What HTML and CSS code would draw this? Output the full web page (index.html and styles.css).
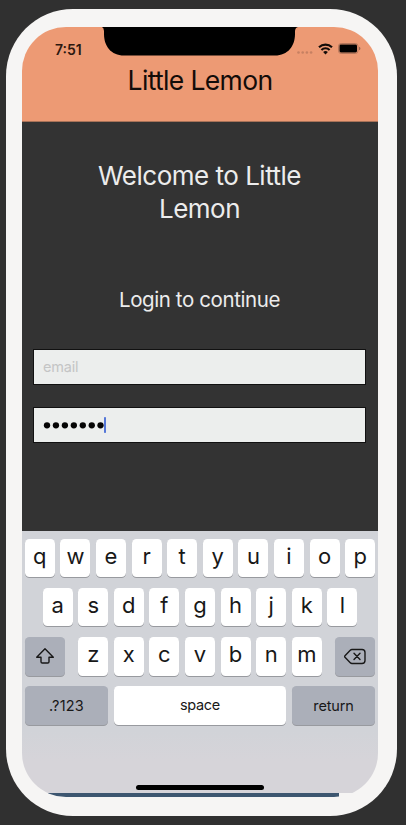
FILE: index.html
```html
<!DOCTYPE html>
<html lang="en">
<head>
<meta charset="utf-8">
<title>Little Lemon</title>
<link rel="stylesheet" href="styles.css">
</head>
<body>
<div class="phone">
  <div class="screen">
    <header class="header">
      <div class="notch"><svg width="196" height="29" viewBox="0 0 196 29"><path d="M0 0H196Q193.300 0.500 193 4V7C193 19 186 28.500 173 28.500H22C9 28.500 2 19 2 7V4Q1.700 .5 0 0Z"/></svg></div>
      <div class="status">
        <span class="time">7:51</span>
        <span class="icons">
          <svg class="dots" width="16" height="3" viewBox="0 0 16 3"><circle cx="1.500" cy="1.500" r="1.300"/><circle cx="5.700" cy="1.500" r="1.300"/><circle cx="9.900" cy="1.500" r="1.300"/><circle cx="14.100" cy="1.500" r="1.300"/></svg>
          <svg class="wifi" width="15" height="12" viewBox="0 0 15 12"><g fill="none" stroke="#120b08" stroke-width="2.200"><path d="M1 4.300C4.700.8 10.300.8 14 4.300"/><path d="M3.400 7C5.800 4.900 9.200 4.900 11.600 7"/></g><path d="M5.100 8.900Q7.500 7.100 9.900 8.900L7.500 11.400Z" fill="#120b08"/></svg>
          <svg class="battery" width="23" height="11" viewBox="0 0 23 11"><rect x=".5" y=".5" width="19.500" height="10" rx="2.700" fill="none" stroke="#b5775c"/><rect x="1.500" y="1.600" width="17.500" height="7.800" rx="1.400"/><path d="M21 3.700Q22.400 4 22.400 5.500T21 7.300Z" fill="#9a6650"/></svg>
        </span>
      </div>
      <h1 class="title">Little Lemon</h1>
    </header>
    <main class="login">
      <h2 class="welcome">Welcome to Little<br>Lemon</h2>
      <p class="prompt">Login to continue</p>
      <div class="field"><span class="placeholder">email</span></div>
      <div class="field"><svg class="password" width="64" height="17" viewBox="0 0 64 17"><g fill="#050505"><circle cx="4" cy="9.300" r="3.150"/><circle cx="12.950" cy="9.300" r="3.150"/><circle cx="21.900" cy="9.300" r="3.150"/><circle cx="30.850" cy="9.300" r="3.150"/><circle cx="39.800" cy="9.300" r="3.150"/><circle cx="48.750" cy="9.300" r="3.150"/><circle cx="57.500" cy="9.300" r="3.150"/></g><rect x="61" y="1" width="2" height="16" rx=".8" fill="#5577d8"/></svg></div>
    </main>
    <section class="keyboard">
      <div class="row"><b class="key">q</b><b class="key">w</b><b class="key">e</b><b class="key">r</b><b class="key">t</b><b class="key">y</b><b class="key">u</b><b class="key">i</b><b class="key">o</b><b class="key">p</b></div>
      <div class="row"><b class="key">a</b><b class="key">s</b><b class="key">d</b><b class="key">f</b><b class="key">g</b><b class="key">h</b><b class="key">j</b><b class="key">k</b><b class="key">l</b></div>
      <div class="row">
        <b class="key special shift"><svg width="20" height="18" viewBox="0 0 20 18"><path d="M10 1.800L18.300 10.200H14V14.700Q14 16 12.700 16H7.300Q6 16 6 14.700V10.200H1.700Z"/></svg></b>
        <b class="key">z</b><b class="key">x</b><b class="key">c</b><b class="key">v</b><b class="key">b</b><b class="key">n</b><b class="key">m</b>
        <b class="key special delete"><svg width="22" height="17" viewBox="0 0 22 17"><path d="M8 1.500H18Q21 1.500 21 4.500V12.500Q21 15.500 18 15.500H8Q7 15.500 6 14.500L1 9.300Q.3 8.500 1 7.700L6 2.500Q7 1.500 8 1.500Z"/><path d="M10 5.300L16 11.500M16 5.300L10 11.500"/></svg></b>
      </div>
      <div class="row"><b class="key special wide numbers">.?123</b><b class="key space">space</b><b class="key special wide">return</b></div>
      <div class="home"></div>
    </section>
    <div class="strip"></div>
  </div>
</div>
</body>
</html>
```
FILE: styles.css
```css
* { box-sizing: border-box; }
body {
  margin: 0;
  height: 825px;
  padding: 9px 9px 9.3px 5.5px;
  background: #303030;
  font-family: Inter, sans-serif;
  overflow: hidden;
}
svg { display: block; }
.phone {
  height: 806.7px;
  padding: 18px 19px 18.7px 16.5px;
  background: #f6f5f4;
  border-radius: 67px;
}
.screen {
  height: 770px;
  overflow: hidden;
  border-radius: 44px;
  background: #f6f5f4;
}
.header {
  position: relative;
  height: 95px;
  background: #ed9a74;
  border-bottom: 1px solid #a87258;
}
.notch { position: absolute; left: 80px; top: 0; }
.status {
  display: flex;
  justify-content: space-between;
  padding: 14px 17px 0 33px;
  height: 37px;
}
.time { font-size: 14px; line-height: 17px; font-weight: 600; color: #2c1810; }
.icons { display: flex; align-items: flex-start; }
.dots { margin: 10px 5px 0 0; fill: #c68062; }
.wifi { margin: 1.500px 5px 0 0; }
.battery { margin-top: 2px; }
.title {
  margin: 0;
  text-align: center;
  font-size: 26.500px;
  line-height: 32px;
  font-weight: 400;
  letter-spacing: -0.650px;
  color: #130c09;
}
.login { height: 409px; padding: 37px 12px 0 11px; background: #333; color: #ececec; }
.welcome { margin: 0; text-align: center; font-size: 26px; line-height: 33px; font-weight: 400; letter-spacing: -0.500px; }
.prompt { margin: 62px 0 36px; text-align: center; font-size: 20.500px; line-height: 26px; font-weight: 400; letter-spacing: -0.400px; }
.field {
  display: flex;
  align-items: center;
  height: 36px;
  margin-bottom: 22px;
  padding: 0 0 1px 9px;
  background: #eceeed;
  border: 1px solid #111;
}
.placeholder { font-size: 14.500px; letter-spacing: -0.200px; color: #c4c5c5; }
.keyboard {
  display: flex;
  flex-direction: column;
  gap: 10.800px;
  height: 262px;
  padding: 7.500px 2.500px 0;
  background: linear-gradient(#d1d3d8 0 200px, #d6d4d9 230px);
}
.row { display: flex; justify-content: center; gap: 5.600px; }
.key {
  display: flex;
  justify-content: center;
  width: 30px;
  height: 38.500px;
  border-radius: 4.500px;
  background: #fff;
  box-shadow: 0 1px 0 #989a9f;
  color: #181818;
  font-size: 22px;
  line-height: 35px;
  font-weight: 400;
}
.special { background: #abafb9; align-items: center; }
.special svg { fill: none; stroke: #181818; stroke-width: 1.400; stroke-linejoin: round; stroke-linecap: round; }
.shift { width: 40px; margin-right: 7.500px; }
.delete { width: 40px; margin-left: 7.500px; }
.wide { width: 83px; font-size: 14.500px; line-height: 37px; letter-spacing: -0.150px; }
.numbers { line-height: 38px; letter-spacing: 0.200px; }
.special.wide:last-child { padding-bottom: 1px; }
.space { width: 172.800px; font-size: 14.500px; line-height: 37px; letter-spacing: -0.300px; }
.home { width: 128px; height: 5px; margin: 49px auto 0; border-radius: 3px; background: #000; }
.strip { width: 317px; height: 4px; background: #3d5670; }
```
